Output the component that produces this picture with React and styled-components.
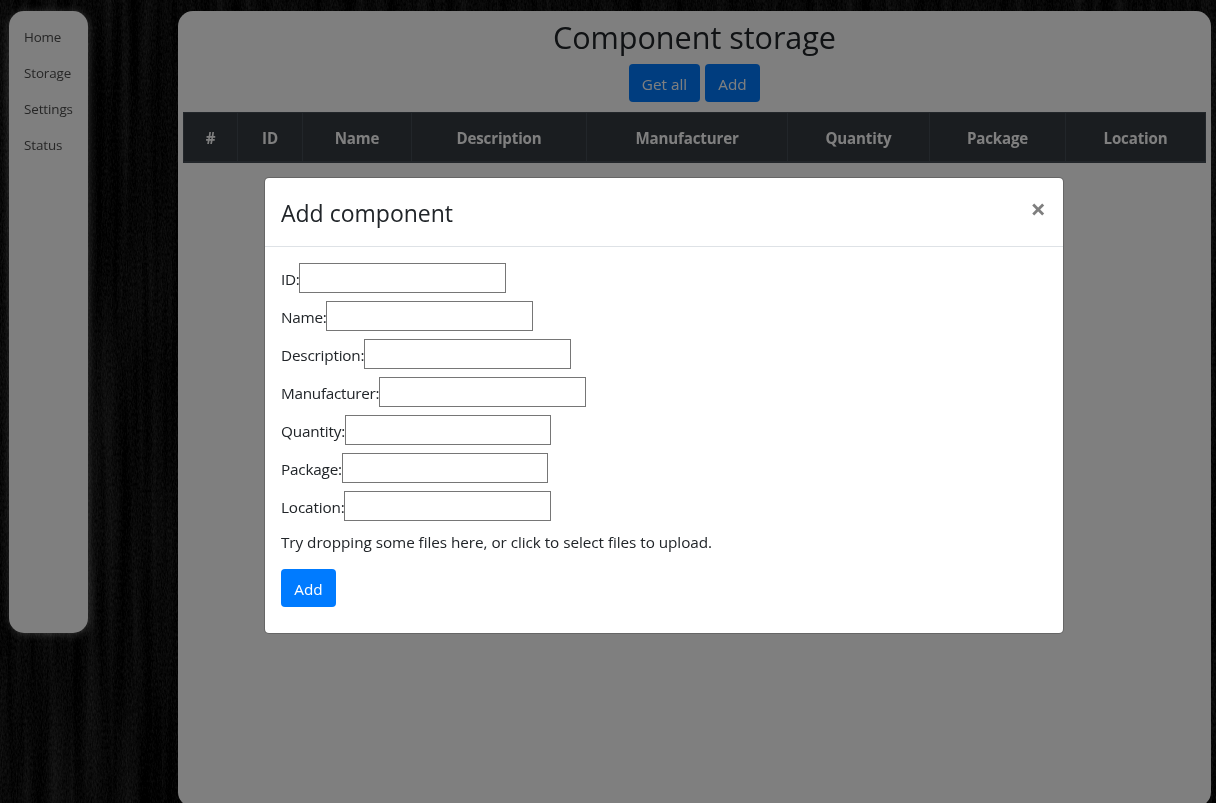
import React from "react";
import styled, { createGlobalStyle } from "styled-components";

const GlobalStyle = createGlobalStyle`
  *, *::before, *::after { box-sizing: border-box; }
  html { height: 100%; overflow: hidden; background: #101010; }
  body {
    margin: 0;
    height: 100%;
    font-family: "Open Sans", "Noto Sans", sans-serif;
    font-size: 15.3px;
    line-height: 24px;
    color: #212529;
  }
`;

const Text = styled.span`
  letter-spacing: ${(p) => p.$track || 0}px;
  white-space: nowrap;
`;

const WoodSvg = styled.svg`
  position: fixed;
  inset: 0;
  width: 100%;
  height: 100%;
  z-index: -1;
`;

const Page = styled.div`
  display: flex;
  align-items: flex-start;
  gap: 90px;
  height: 100vh;
  padding: 11px 5px 0 9px;
  overflow: hidden;
`;

const Sidebar = styled.nav`
  display: flex;
  flex-direction: column;
  flex: none;
  width: 79px;
  height: 622px;
  padding: 8px 0 0 15px;
  border-radius: 15px;
  background: #fff;
  box-shadow: 1px 1px 9px rgba(255, 255, 255, 0.4);
`;

const NavLink = styled.a`
  height: 36px;
  line-height: 36px;
  font-size: 13.4px;
  color: #4c4c4c;
`;

const Panel = styled.main`
  display: flex;
  flex-direction: column;
  align-items: center;
  flex: 1;
  height: 796px;
  padding: 7px 5px 0;
  border-radius: 15px;
  background: #fff;
`;

const Title = styled.h2`
  margin: 0 0 8px;
  font-size: 30.6px;
  font-weight: 400;
  line-height: 38px;
`;

const Actions = styled.div`
  display: flex;
  gap: 5px;
  margin-bottom: 10px;
`;

const Button = styled.button`
  display: block;
  width: ${(p) => p.$width}px;
  height: 38px;
  padding: 2px 0 0;
  border: 0;
  border-radius: 4px;
  background: #007bff;
  color: #fff;
  font: inherit;
  text-align: center;
`;

const Table = styled.table`
  width: 1023px;
  table-layout: fixed;
  border-collapse: separate;
  border-spacing: 0;
  background: #343a40;
  border: 1px solid #454d55;
  color: #fff;
`;

const HeadCell = styled.th`
  width: ${(p) => p.$width}px;
  height: 49px;
  padding: 2px 0 0;
  border-right: 1px solid #454d55;
  border-bottom: 1px solid #454d55;
  font-size: 15.1px;
  font-weight: 700;
  text-align: center;
  &:last-child { border-right: 0; }
`;

const Backdrop = styled.div`
  position: fixed;
  inset: 0;
  display: flex;
  align-items: flex-start;
  padding: 177px 0 0 264px;
  background: rgba(0, 0, 0, 0.5);
`;

const Dialog = styled.section`
  width: 800px;
  height: 457px;
  border: 1px solid rgba(0, 0, 0, 0.2);
  border-radius: 5px;
  background: #fff;
  background-clip: padding-box;
`;

const DialogHeader = styled.header`
  display: flex;
  justify-content: space-between;
  height: 69px;
  padding: 17px 17px 0 16px;
  border-bottom: 1px solid #dee2e6;
`;

const DialogTitle = styled.h4`
  margin: 0;
  font-size: 23px;
  font-weight: 400;
  line-height: 36px;
`;

const Close = styled.button`
  height: 24px;
  margin-top: 2px;
  padding: 0;
  border: 0;
  background: none;
  color: #000;
  opacity: 0.5;
  font: 700 27px/24px "Open Sans", sans-serif;
`;

const DialogBody = styled.div`
  padding: 16px;
`;

const Field = styled.label`
  display: flex;
  height: 38px;
`;

const Label = styled.span`
  flex: none;
  width: ${(p) => p.$width}px;
  padding-top: 4px;
  letter-spacing: ${(p) => p.$track}px;
  white-space: nowrap;
`;

const Input = styled.input`
  width: ${(p) => p.$width}px;
  height: 30px;
  padding: 1px 2px;
  border: 1px solid #767676;
  border-radius: 0;
  background: #fff;
  font: inherit;
`;

const DropHint = styled.p`
  margin: 1px 0 15px;
`;

const links = [["Home", -0.2], ["Storage", -0.1], ["Settings", -0.1], ["Status", -0.1]];

const columns = [
  ["#", 54], ["ID", 65], ["Name", 109], ["Description", 175],
  ["Manufacturer", 201], ["Quantity", 142], ["Package", 136], ["Location", 139],
];

const fields = [
  ["ID:", 18, -0.35, 207], ["Name:", 45, -0.25, 207], ["Description:", 83, -0.2, 207],
  ["Manufacturer:", 98, -0.28, 207], ["Quantity:", 64, -0.18, 206],
  ["Package:", 61, -0.2, 206], ["Location:", 63, -0.15, 207],
];

function Wood() {
  return (
    <WoodSvg aria-hidden="true">
      <filter id="grain" x="0" y="0" width="100%" height="100%" colorInterpolationFilters="sRGB">
        <feTurbulence type="fractalNoise" baseFrequency="0.07 0.003" numOctaves="3" seed="8" result="bands" />
        <feTurbulence type="fractalNoise" baseFrequency="0.8 0.3" numOctaves="2" seed="3" result="fine" />
        <feColorMatrix in="bands" values="0.25 0 0 0 0  0.25 0 0 0 0  0.25 0 0 0 0  0 0 0 0 1" result="b" />
        <feColorMatrix in="fine" values="0.22 0 0 0 0  0.22 0 0 0 0  0.22 0 0 0 0  0 0 0 0 1" result="f" />
        <feComposite in="b" in2="f" operator="arithmetic" k1="0" k2="1" k3="1" k4="0" />
        <feColorMatrix values="1 0 0 0 -0.175  1 0 0 0 -0.175  1 0 0 0 -0.175  0 0 0 0 1" />
      </filter>
      <rect width="100%" height="100%" filter="url(#grain)" />
    </WoodSvg>
  );
}

export default function App() {
  return (
    <>
      <GlobalStyle />
      <Wood />
      <Page>
        <Sidebar>
          {links.map(([name, track]) => (
            <NavLink key={name}><Text $track={track}>{name}</Text></NavLink>
          ))}
        </Sidebar>
        <Panel>
          <Title><Text $track={-0.05}>Component storage</Text></Title>
          <Actions>
            <Button $width={71}><Text>Get all</Text></Button>
            <Button $width={55}><Text>Add</Text></Button>
          </Actions>
          <Table>
            <thead>
              <tr>
                {columns.map(([name, width]) => (
                  <HeadCell key={name} $width={width}><Text $track={-0.15}>{name}</Text></HeadCell>
                ))}
              </tr>
            </thead>
          </Table>
        </Panel>
      </Page>
      <Backdrop>
        <Dialog role="dialog">
          <DialogHeader>
            <DialogTitle><Text>Add component</Text></DialogTitle>
            <Close aria-label="Close">×</Close>
          </DialogHeader>
          <DialogBody>
            {fields.map(([name, width, track, inputWidth]) => (
              <Field key={name}>
                <Label $width={width} $track={track}>{name}</Label>
                <Input $width={inputWidth} />
              </Field>
            ))}
            <DropHint><Text $track={-0.055}>Try dropping some files here, or click to select files to upload.</Text></DropHint>
            <Button $width={55}><Text>Add</Text></Button>
          </DialogBody>
        </Dialog>
      </Backdrop>
    </>
  );
}
